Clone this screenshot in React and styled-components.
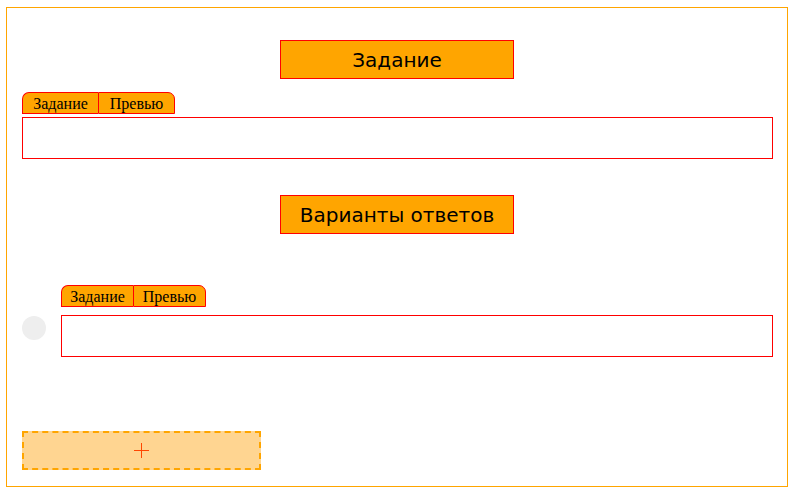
import React from "react";
import styled, { createGlobalStyle } from "styled-components";

const GlobalStyle = createGlobalStyle`
	body {
		margin: 0;
		background: #fff;
		font-family: "DejaVu Sans", Verdana, sans-serif;
	}
`;

const Frame = styled.div`
	box-sizing: border-box;
	width: 782px;
	height: 480px;
	margin: 7px 0 0 6px;
	border: 1px solid #ffa500;
	padding: 32px 14px 0 15px;
	display: flex;
	flex-direction: column;
`;

const Title = styled.div`
	box-sizing: border-box;
	align-self: center;
	width: 234px;
	height: 39px;
	margin-right: 1px;
	margin-top: ${(p) => p.$top || 0}px;
	background: #ffa500;
	border: 1px solid #ff0000;
	display: flex;
	align-items: center;
	justify-content: center;
	font-size: 20px;
	color: #000;
`;

const Tabs = styled.div`
	display: flex;
	margin-top: ${(p) => p.$top || 0}px;
`;

const Tab = styled.div`
	box-sizing: border-box;
	width: ${(p) => (p.$compact ? 72 : 76)}px;
	height: 22px;
	background: #ffa500;
	border: 1px solid #ff0000;
	font-family: "Liberation Serif", "Times New Roman", serif;
	font-size: 16px;
	line-height: 21px;
	text-align: center;
	color: #000;
	&:first-child {
		border-top-left-radius: 7px;
		border-right: none;
	}
	&:last-child {
		width: ${(p) => (p.$compact ? 73 : 77)}px;
		border-top-right-radius: 7px;
	}
`;

const Editor = styled.div`
	box-sizing: border-box;
	height: 42px;
	border: 1px solid #ff0000;
	margin-top: ${(p) => p.$top || 0}px;
`;

const Answer = styled.div`
	display: grid;
	grid-template-columns: 24px 1fr;
	column-gap: 15px;
	row-gap: 8px;
	margin-top: 51px;
`;

const Marker = styled.div`
	width: 24px;
	height: 24px;
	margin-top: 1px;
	border-radius: 50%;
	background: #eeeeee;
`;

const AddButton = styled.button`
	box-sizing: border-box;
	width: 239px;
	height: 39px;
	margin-top: 74px;
	background: #ffd591;
	border: 2px dashed #ffa500;
	display: flex;
	align-items: center;
	justify-content: center;
	padding: 0;
	cursor: pointer;
`;

const TabGroup = ({ compact }) => (
	<>
		<Tab $compact={compact}>Задание</Tab>
		<Tab $compact={compact}>Превью</Tab>
	</>
);

const App = () => {
	return (
		<>
			<GlobalStyle />
			<Frame>
				<Title>Задание</Title>
				<Tabs $top={13}>
					<TabGroup />
				</Tabs>
				<Editor $top={3} />

				<Title $top={36}>Варианты ответов</Title>
				<Answer>
					<span />
					<Tabs>
						<TabGroup compact />
					</Tabs>
					<Marker />
					<Editor />
				</Answer>

				<AddButton>
					<svg width="15" height="15" viewBox="0 0 15 15">
						<path d="M7.5 0v15M0 7.5h15" stroke="#ff4500" strokeWidth="1" />
					</svg>
				</AddButton>
			</Frame>
		</>
	);
};

export default App;
